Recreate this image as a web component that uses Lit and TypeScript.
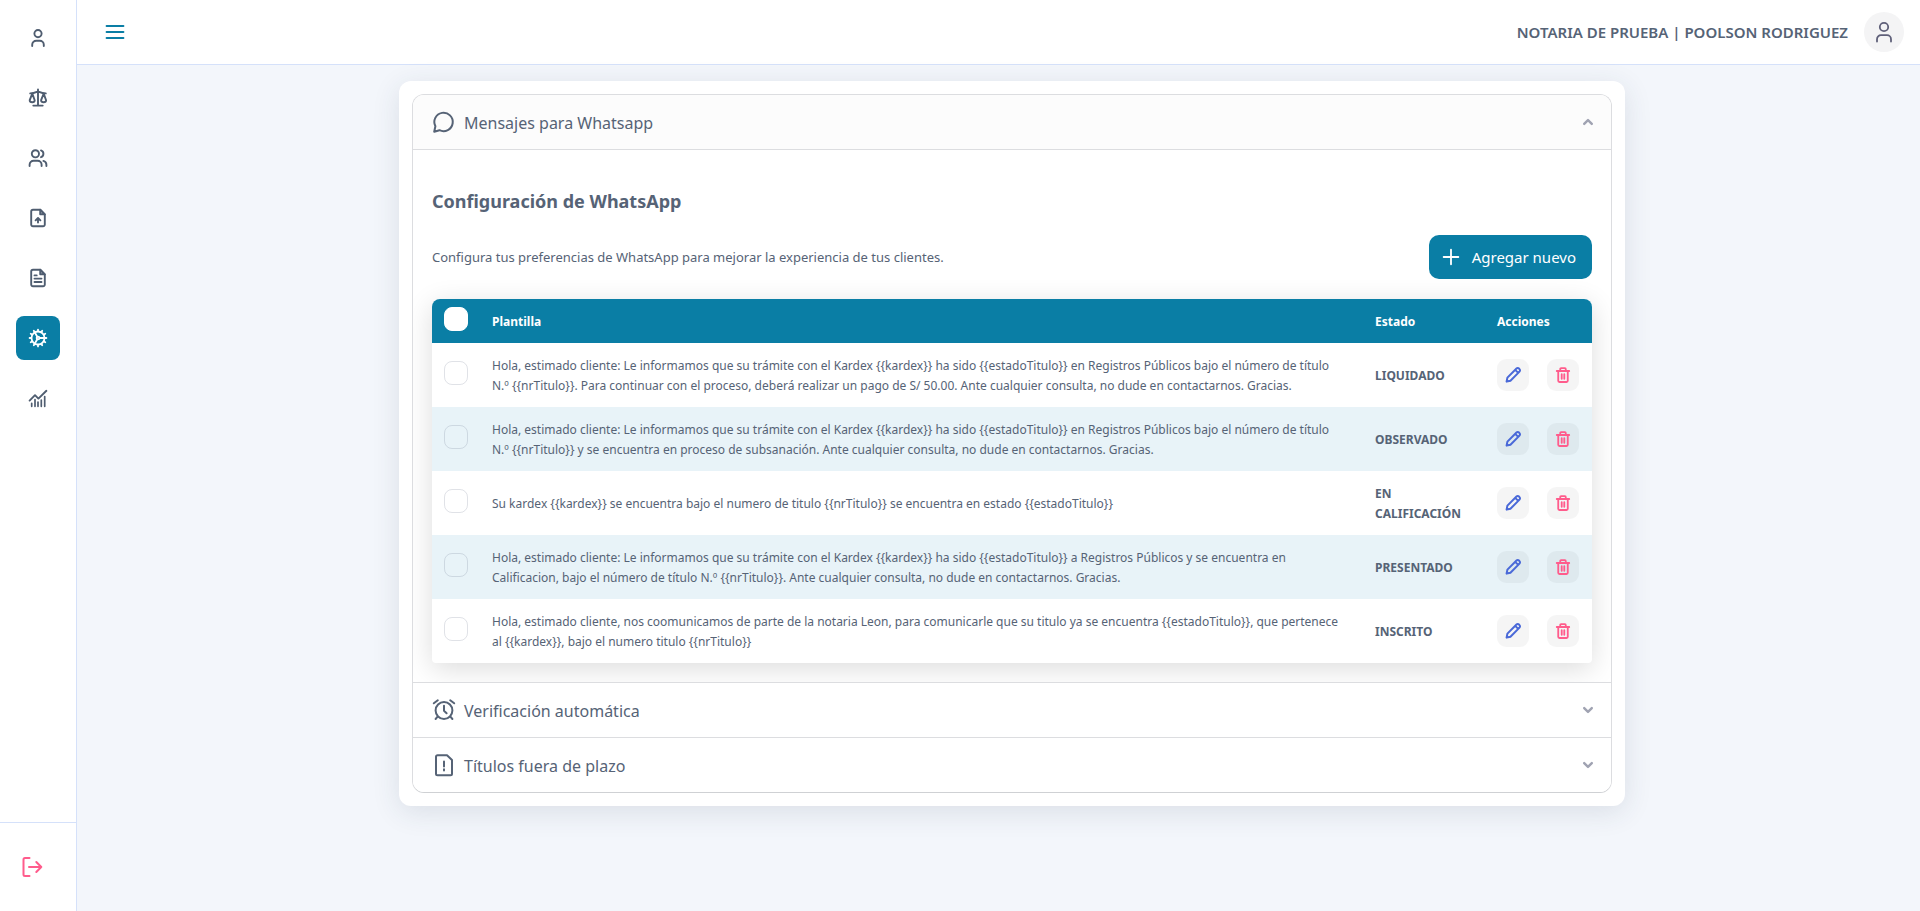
import { LitElement, html, css, svg, nothing } from "lit";
import { customElement, property, state } from "lit/decorators.js";
import { classMap } from "lit/directives/class-map.js";

const GEAR_TEETH = Array.from({ length: 12 }, (_, i) => i * 30);

const ICONS = {
  user: svg`<circle cx="12" cy="7.6" r="3.6"/><path d="M6.2 20v-1.3a4 4 0 0 1 4-4h3.6a4 4 0 0 1 4 4V20"/>`,
  scale: svg`<path d="M12 3.4v16M7.3 19.6h9.4M4.2 7.4C8.4 7.4 10 6.2 12 5.4c2 .8 3.6 2 7.8 2"/><path d="M6.3 7.6 3.7 14.2c0 2.8 5 2.8 5 0zM17.7 7.6l-2.6 6.6c0 2.8 5 2.8 5 0z"/>`,
  users: svg`<circle cx="9.4" cy="7.8" r="3.6"/><path d="M3.6 20v-1.3a4 4 0 0 1 4-4h4a4 4 0 0 1 4 4V20"/><path d="M15 4.400a3.600 3.600 0 0 1 0 6.800M17.400 14.900a3.900 3.900 0 0 1 3 3.800V20"/>`,
  upload: svg`<path d="M14.200 3.700H7a1.800 1.800 0 0 0-1.800 1.800v13A1.800 1.800 0 0 0 7 20.300h10a1.800 1.800 0 0 0 1.800-1.800V8.300z"/><path fill="currentColor" fill-opacity="0.35" d="M14.200 3.700v4.600h4.600z"/><path d="M12 16.600v-4.400M9.600 14.300 12 11.900l2.400 2.400"/>`,
  document: svg`<path d="M14.200 3.700H7a1.800 1.800 0 0 0-1.800 1.800v13A1.800 1.800 0 0 0 7 20.300h10a1.800 1.800 0 0 0 1.800-1.800V8.300z"/><path fill="currentColor" fill-opacity="0.35" d="M14.200 3.700v4.600h4.600z"/><path d="M8.500 9.400h2.200M8.500 12.600h7M8.500 16h7"/>`,
  gear: svg`<circle cx="12" cy="12" r="6.500"/><g>${GEAR_TEETH.map((a) => svg`<path transform="rotate(${a} 12 12)" d="M12 5V3.600"/>`)}</g><circle cx="12" cy="12" r="1.400"/><path d="M13.400 12h5M11.300 10.800 8.800 6.500M11.300 13.200l-2.500 4.300"/>`,
  chart: svg`<path d="M3.600 14.600 9 9.200l3.400 3.400 8-7.800"/><path stroke-width="1.700" d="M5.700 20.300v-3M9 20.300v-6.800M12 20.300v-4.300M15.300 20.300v-6.300M18.700 20.300v-9.800"/>`,
  menu: svg`<path d="M3.600 6h16.800M3.600 12h16.800M3.600 18h16.800"/>`,
  logout: svg`<path d="M9.500 3H5a1.500 1.500 0 0 0-1.500 1.500v15A1.500 1.500 0 0 0 5 21h4.500M9 12h12.300M16.300 7l5 5-5 5"/>`,
  profile: svg`<circle cx="12" cy="7" r="4.200"/><path d="M5 21.500v-2.300a4 4 0 0 1 4-4h6a4 4 0 0 1 4 4v2.300"/>`,
  chat: svg`<path d="M2.200 21.800 3.400 16.200a9.200 9.200 0 1 1 4.100 4z"/>`,
  alarm: svg`<circle cx="12" cy="12.500" r="8.400"/><path d="M12 7.800v5l2.600 2.400M5.600 18.700 3.600 21M18.400 18.700l2 2.300M1.800 5.300l4-3M22.200 5.300l-4-3"/>`,
  fileAlert: svg`<path d="M15 2.200H5.500A1.500 1.500 0 0 0 4 3.700v17a1.500 1.500 0 0 0 1.500 1.500h13a1.500 1.500 0 0 0 1.500-1.500V7zM12 8.500v5M12 16.200v1.200"/>`,
  up: svg`<path d="m8.200 13.900 3.800-3.800 3.800 3.800"/>`,
  down: svg`<path d="m8.200 10.100 3.800 3.800 3.800-3.800"/>`,
  plus: svg`<path d="M12 4v16M4 12h16"/>`,
  pencil: svg`<path d="M5 19.200l.9-4.300L15.800 5a1.900 1.900 0 0 1 2.700 0l.6.600a1.900 1.900 0 0 1 0 2.700L9.200 18.200zM14.400 6.400l3.300 3.300"/>`,
  trash: svg`<path d="M5.200 7.600h13.600M9 7.200V5.400A.9.900 0 0 1 9.900 4.500h4.200a.9.900 0 0 1 .9.900v1.800M6.800 7.800v10.500a1.300 1.300 0 0 0 1.300 1.300h7.800a1.300 1.300 0 0 0 1.300-1.300V7.800M10.600 11.200v5M13.400 11.200v5"/>`,
};

type IconName = keyof typeof ICONS;

@customElement("app-icon")
class AppIcon extends LitElement {
  static styles = css`
    :host { display: block; flex: none; width: 24px; height: 24px; }
    svg { display: block; width: 100%; height: 100%; }
  `;
  @property() name: IconName = "user";
  @property({ type: Number }) weight = 2;
  render() {
    return html`<svg viewBox="0 0 24 24" fill="none" stroke="currentColor" stroke-width=${this.weight}
      stroke-linecap="round" stroke-linejoin="round" aria-hidden="true">${ICONS[this.name]}</svg>`;
  }
}

interface Template { text: string; status: string; }

const TEMPLATES: Template[] = [
  { text: "Hola, estimado cliente: Le informamos que su trámite con el Kardex {{kardex}} ha sido {{estadoTitulo}} en Registros Públicos bajo el número de título N.º {{nrTitulo}}. Para continuar con el proceso, deberá realizar un pago de S/ 50.00. Ante cualquier consulta, no dude en contactarnos. Gracias.", status: "LIQUIDADO" },
  { text: "Hola, estimado cliente: Le informamos que su trámite con el Kardex {{kardex}} ha sido {{estadoTitulo}} en Registros Públicos bajo el número de título N.º {{nrTitulo}} y se encuentra en proceso de subsanación. Ante cualquier consulta, no dude en contactarnos. Gracias.", status: "OBSERVADO" },
  { text: "Su kardex {{kardex}} se encuentra bajo el numero de titulo {{nrTitulo}} se encuentra en estado {{estadoTitulo}}", status: "EN CALIFICACIÓN" },
  { text: "Hola, estimado cliente: Le informamos que su trámite con el Kardex {{kardex}} ha sido {{estadoTitulo}} a Registros Públicos y se encuentra en Calificacion, bajo el número de título N.º {{nrTitulo}}. Ante cualquier consulta, no dude en contactarnos. Gracias.", status: "PRESENTADO" },
  { text: "Hola, estimado cliente, nos coomunicamos de parte de la notaria Leon, para comunicarle que su titulo ya se encuentra {{estadoTitulo}}, que pertenece al {{kardex}}, bajo el numero titulo {{nrTitulo}}", status: "INSCRITO" },
];

const NAV: { icon: IconName; label: string }[] = [
  { icon: "user", label: "Clientes" },
  { icon: "scale", label: "Kardex" },
  { icon: "users", label: "Usuarios" },
  { icon: "upload", label: "Cargar" },
  { icon: "document", label: "Documentos" },
  { icon: "gear", label: "Configuración" },
  { icon: "chart", label: "Reportes" },
];

const SECTIONS: { icon: IconName; title: string }[] = [
  { icon: "chat", title: "Mensajes para Whatsapp" },
  { icon: "alarm", title: "Verificación automática" },
  { icon: "fileAlert", title: "Títulos fuera de plazo" },
];

@customElement("whatsapp-settings")
class WhatsappSettings extends LitElement {
  static styles = css`
    * { box-sizing: border-box; }
    :host { display: block; padding: 19px; }
    h2 { margin: 18px 0 20px; font-size: 18px; line-height: 28px; font-weight: 700; }
    button { font: inherit; border: 0; cursor: pointer; }
    .intro { display: flex; align-items: center; justify-content: space-between; gap: 16px; margin-bottom: 20px; }
    .intro p { margin: 0; font-size: 13px; line-height: 20px; }
    .add { display: flex; align-items: center; gap: 10px; height: 44px; padding: 0 16px 0 11px; border-radius: 10px;
      background: #0a7ea5; color: #fff; font-size: 15px; white-space: nowrap; }
    .add app-icon { width: 22px; height: 22px; }
    .frame { border-radius: 8px 8px 4px 4px; overflow: hidden; box-shadow: 0 6px 28px rgba(0, 0, 0, 0.14); background: #fff; }
    table { width: 100%; border-collapse: collapse; table-layout: fixed; font-size: 12px; line-height: 20px; }
    .check { width: 48px; }
    .status { width: 122px; font-weight: 700; }
    .actions { width: 107px; }
    th { height: 44px; padding: 1px 12px 0; background: #0a7ea5; color: #fff; text-align: left; font-weight: 700; }
    td { height: 64px; padding: 13px 12px 11px; }
    th.check, td.check { padding: 0 12px; }
    td.text { padding-right: 18px; }
    td.actions { padding: 12px 10px 12px 12px; }
    tbody tr:nth-child(even) { background: #e8f3f8; }
    .tick { display: block; padding-bottom: 4px; }
    .tick input { appearance: none; display: block; width: 24px; height: 24px; margin: 0; border: 1px solid rgba(82, 95, 122, 0.18); border-radius: 8px; }
    thead .tick input { background: #fff; border-color: #fff; }
    .pair { display: flex; gap: 18px; }
    .tool { display: grid; place-items: center; width: 32px; height: 32px; padding: 0; border-radius: 9px; background: rgba(0, 0, 0, 0.04); }
    .tool app-icon { width: 22px; height: 22px; }
    .edit { color: #4a69d8; }
    .remove { color: #ff5c8c; }
  `;
  render() {
    return html`
      <h2>Configuración de WhatsApp</h2>
      <div class="intro">
        <p>Configura tus preferencias de WhatsApp para mejorar la experiencia de tus clientes.</p>
        <button class="add" type="button"><app-icon name="plus" .weight=${2}></app-icon>Agregar nuevo</button>
      </div>
      <div class="frame">
        <table>
          <thead>
            <tr>
              <th class="check"><label class="tick"><input type="checkbox" aria-label="Seleccionar todo" /></label></th>
              <th>Plantilla</th>
              <th class="status">Estado</th>
              <th class="actions">Acciones</th>
            </tr>
          </thead>
          <tbody>
            ${TEMPLATES.map((t) => html`
              <tr>
                <td class="check"><label class="tick"><input type="checkbox" aria-label="Seleccionar ${t.status}" /></label></td>
                <td class="text">${t.text}</td>
                <td class="status">${t.status}</td>
                <td class="actions">
                  <div class="pair">
                    <button class="tool edit" type="button" aria-label="Editar"><app-icon name="pencil" .weight=${2.2}></app-icon></button>
                    <button class="tool remove" type="button" aria-label="Eliminar"><app-icon name="trash" .weight=${2}></app-icon></button>
                  </div>
                </td>
              </tr>`)}
          </tbody>
        </table>
      </div>`;
  }
}

@customElement("app-root")
class AppRoot extends LitElement {
  static styles = css`
    * { box-sizing: border-box; }
    :host { display: flex; min-height: 100vh; background: #f3f6fb; color: #566376;
      font-family: "Noto Sans", "Open Sans", sans-serif; font-size: 16px; }
    button { font: inherit; color: inherit; border: 0; background: none; cursor: pointer; padding: 0; }
    .side { display: flex; flex-direction: column; flex: none; width: 77px; background: #fff; border-right: 1px solid #d5e1fa; }
    .nav { display: flex; flex-direction: column; align-items: center; gap: 16px; padding-top: 16px; flex: 1; }
    .link { display: grid; place-items: center; width: 44px; height: 44px; border-radius: 8px; color: #4f5d70; }
    .active { background: #0a7ea5; color: #fff; }
    .exit { display: flex; align-items: center; height: 89px; padding-left: 20px; border-top: 1px solid #d5e1fa; }
    .exit button { color: #ff5c8c; }
    .page { flex: 1; min-width: 0; }
    .top { display: flex; align-items: center; justify-content: space-between; height: 65px; padding: 0 16px 0 26px;
      background: #fff; border-bottom: 1px solid #d5e1fa; }
    .menu { color: #0a7ea5; }
    .who { display: flex; align-items: center; gap: 16px; font-size: 15px; font-weight: 600; }
    .avatar { display: grid; place-items: center; width: 40px; height: 40px; border-radius: 50%; background: #f4f4f5; color: #5f6079; }
    main { padding: 16px 16px 16px 43px; }
    .card { max-width: 1226px; margin: 0 auto; padding: 13px; border-radius: 12px; background: #fff; box-shadow: 0 6px 28px rgba(40, 60, 80, 0.12); }
    .accordion { border: 1px solid #dcdde0; border-bottom-color: #cfd1d4; border-radius: 12px; overflow: hidden; }
    .section + .section { border-top: 1px solid #dcdde0; }
    .section h3 { margin: 0; font: inherit; }
    .toggle { display: flex; align-items: center; gap: 8px; width: 100%; height: 54px; padding: 0 11px 0 19px; text-align: left; background: #fff; }
    .toggle span { flex: 1; padding-top: 1px; }
    .open .toggle { background: #fcfcfc; }
    .chevron { color: #a0a3b2; }
    .body { border-top: 1px solid #dcdde0; overflow: hidden; }
  `;

  @state() private open = 0;

  private toggle(i: number) {
    this.open = this.open === i ? -1 : i;
  }

  render() {
    return html`
      <aside class="side">
        <nav class="nav">
          ${NAV.map((n) => html`
            <a href="#" aria-label=${n.label} class=${classMap({ link: true, active: n.icon === "gear" })}>
              <app-icon name=${n.icon} .weight=${n.icon === "gear" ? 1.8 : 1.9}></app-icon>
            </a>`)}
        </nav>
        <div class="exit"><button type="button" aria-label="Salir"><app-icon name="logout"></app-icon></button></div>
      </aside>
      <div class="page">
        <header class="top">
          <button class="menu" type="button" aria-label="Menú"><app-icon name="menu"></app-icon></button>
          <div class="who">
            <span>NOTARIA DE PRUEBA | POOLSON RODRIGUEZ</span>
            <button class="avatar" type="button" aria-label="Perfil"><app-icon name="profile" .weight=${1.8}></app-icon></button>
          </div>
        </header>
        <main>
          <div class="card">
            <div class="accordion">
              ${SECTIONS.map((s, i) => html`
                <section class=${classMap({ section: true, open: this.open === i })}>
                  <h3>
                    <button class="toggle" type="button" aria-expanded=${this.open === i} @click=${() => this.toggle(i)}>
                      <app-icon name=${s.icon}></app-icon>
                      <span>${s.title}</span>
                      <app-icon class="chevron" name=${this.open === i ? "up" : "down"} .weight=${2.4}></app-icon>
                    </button>
                  </h3>
                  ${this.open === i && i === 0 ? html`<div class="body"><whatsapp-settings></whatsapp-settings></div>` : nothing}
                </section>`)}
            </div>
          </div>
        </main>
      </div>`;
  }
}
